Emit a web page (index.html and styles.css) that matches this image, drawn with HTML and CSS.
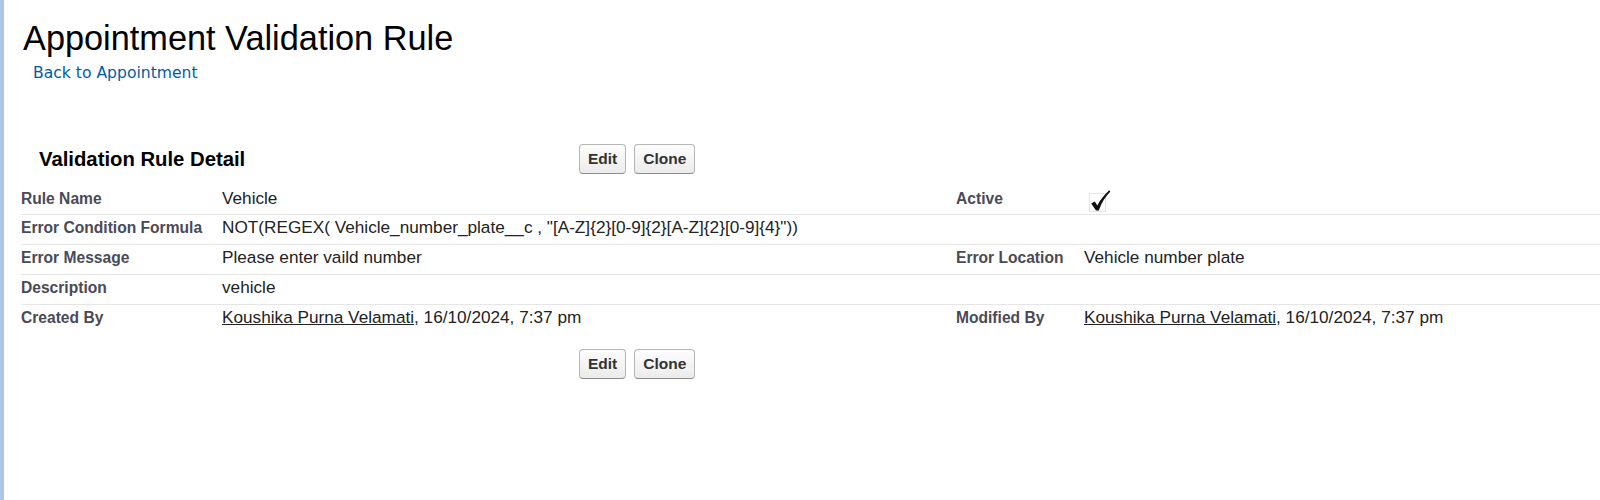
FILE: index.html
```html
<!DOCTYPE html>
<html lang="en">
<head>
<meta charset="utf-8">
<title>Appointment Validation Rule</title>
<link rel="stylesheet" href="styles.css">
</head>
<body>
<div class="page">
  <div class="strip"></div>
  <main class="content">
    <h1 class="page-title">Appointment Validation Rule</h1>
    <div class="breadcrumb"><a href="#">Back to Appointment</a></div>

    <div class="block-header">
      <h2 class="block-title">Validation Rule Detail</h2>
      <div class="buttons">
        <button class="btn" type="button">Edit</button>
        <button class="btn" type="button">Clone</button>
      </div>
    </div>

    <div class="detail">
      <div class="row">
        <div class="label">Rule Name</div>
        <div class="data">Vehicle</div>
        <div class="label">Active</div>
        <div class="data check-cell">
          <svg class="checkbox" width="30" height="24" viewBox="0 0 30 24" aria-label="Checked">
            <rect x="5.5" y="4.5" width="16" height="18" fill="none" stroke="#c8c8c8" stroke-width="1" stroke-dasharray="1 1"/>
            <path d="M7.2 14.6 L10.8 12.6 L13.3 16.6 C16 11 20 6 25.2 1.2 L26.4 2.6 C21.6 7.6 17.6 13.6 14.8 21.4 L12.0 21.6 Z" fill="#111"/>
          </svg>
        </div>
      </div>
      <div class="row">
        <div class="label">Error Condition Formula</div>
        <div class="data wide">NOT(REGEX( Vehicle_number_plate__c , "[A-Z]{2}[0-9]{2}[A-Z]{2}[0-9]{4}"))</div>
      </div>
      <div class="row">
        <div class="label">Error Message</div>
        <div class="data">Please enter vaild number</div>
        <div class="label">Error Location</div>
        <div class="data">Vehicle number plate</div>
      </div>
      <div class="row">
        <div class="label">Description</div>
        <div class="data wide">vehicle</div>
      </div>
      <div class="row last">
        <div class="label">Created By</div>
        <div class="data"><a class="user" href="#">Koushika Purna Velamati</a>, 16/10/2024, 7:37 pm</div>
        <div class="label">Modified By</div>
        <div class="data"><a class="user" href="#">Koushika Purna Velamati</a>, 16/10/2024, 7:37 pm</div>
      </div>
    </div>

    <div class="block-footer">
      <div class="buttons">
        <button class="btn" type="button">Edit</button>
        <button class="btn" type="button">Clone</button>
      </div>
    </div>
  </main>
</div>
</body>
</html>
```

FILE: styles.css
```css
* { box-sizing: border-box; }

html, body {
  margin: 0;
  padding: 0;
  background: #fff;
}

body {
  font-family: "Liberation Sans", Arial, sans-serif;
  color: #000;
}

.page {
  display: flex;
  min-height: 100vh;
  overflow: hidden;
}

.strip {
  flex: 0 0 4px;
  background: #b1c6e4;
}

.content {
  flex: 1 1 auto;
  padding-left: 17px;
  min-width: 0;
}

.page-title {
  margin: 18px 0 0 2px;
  font-size: 34.3px;
  line-height: 40px;
  font-weight: normal;
  color: #000;
}

.breadcrumb {
  margin: 6px 0 0 12px;
  font-family: "DejaVu Sans", Verdana, sans-serif;
  font-size: 15.6px;
  line-height: 18px;
}

.breadcrumb a {
  color: #015ba7;
  text-decoration: none;
}

.block-header {
  display: flex;
  align-items: center;
  margin-top: 62px;
  height: 30px;
}

.block-title {
  width: 558px;
  flex: 0 0 558px;
  margin: 0;
  padding-left: 18px;
  font-size: 20.3px;
  line-height: 23px;
  font-weight: bold;
  color: #000;
}

.buttons {
  display: flex;
  gap: 8px;
}

.btn {
  height: 30px;
  padding: 0 8px;
  font-family: "Liberation Sans", Arial, sans-serif;
  font-size: 15.5px;
  font-weight: bold;
  color: #333;
  background: linear-gradient(#fdfdfd, #ebebeb);
  border: 1px solid #b5b5b5;
  border-bottom-color: #8c8c8c;
  border-radius: 4px;
  cursor: pointer;
}

.detail {
  margin-top: 11.5px;
}

.row {
  display: grid;
  grid-template-columns: 201px 734px 128px 1fr;
  border-bottom: 1px solid #e6e6e6;
}

.row.last {
  border-bottom: none;
}

.label,
.data {
  padding: 3px 0 6.8px;
  line-height: 19px;
  white-space: nowrap;
}

.label {
  font-size: 15.6px;
  font-weight: bold;
  color: #4a4a56;
}

.data {
  font-size: 17.2px;
  color: #222;
}

.data.wide {
  grid-column: 2 / 5;
}

.check-cell {
  padding-bottom: 0;
}

.checkbox {
  display: block;
}

.user {
  color: #222;
  text-decoration: underline;
}

.block-footer {
  margin-top: 15.5px;
  padding-left: 558px;
}
```
